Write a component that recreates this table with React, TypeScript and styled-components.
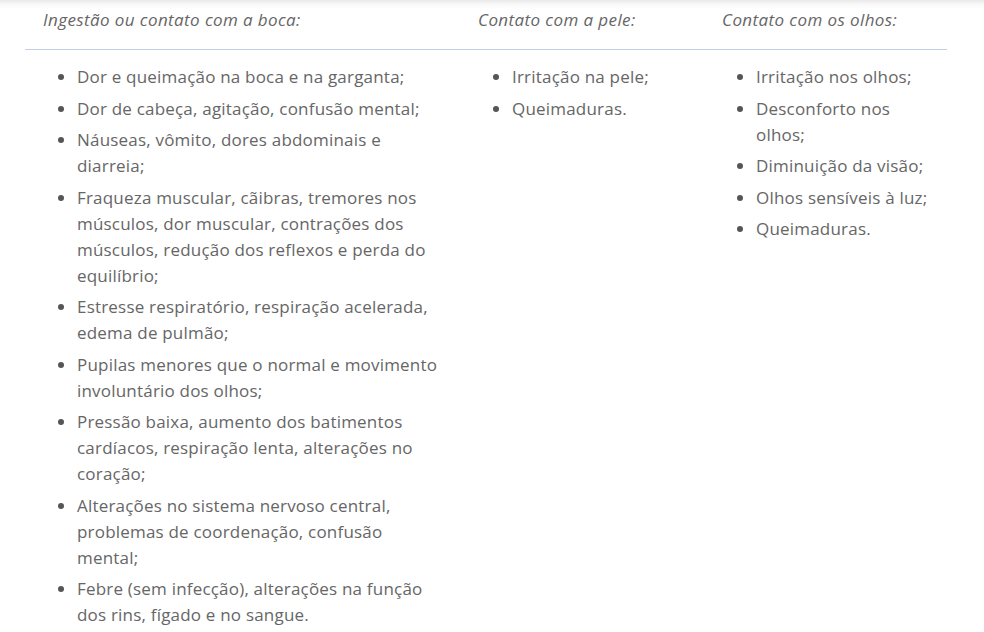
import styled, { createGlobalStyle } from "styled-components";

const GlobalStyle = createGlobalStyle`
  body {
    margin: 0;
    background: #fff;
    font-family: "Open Sans", "Liberation Sans", sans-serif;
  }
`;

const Page = styled.div`
  width: 984px;
  height: 632px;
  overflow: hidden;
  background: linear-gradient(to bottom, #e9e9e9 0px, #f8f8f8 4px, #ffffff 9px);
  padding: 0 0 0 25px;
  box-sizing: border-box;
`;

const Table = styled.div`
  display: grid;
  grid-template-columns: 435px 244px 243px;
  width: 922px;
`;

const HeadCell = styled.div`
  padding: 10px 18px 0;
  height: 50px;
  box-sizing: border-box;
  border-bottom: 1px solid #c4cfe6;
  font-style: italic;
  font-size: 17px;
  letter-spacing: 0.4px;
  line-height: 20px;
  color: #666;
`;

const BodyCell = styled.div`
  padding: 14px 18px 0;
`;

const List = styled.ul`
  margin: 0;
  padding: 0 0 0 34px;
  list-style: disc;
  color: #666;
  font-size: 17px;
  letter-spacing: 0.2px;
  line-height: 26px;
  li {
    margin-bottom: 5.5px;
  }
  li::marker {
    color: #555;
  }
`;

const columns = [
  {
    title: "Ingestão ou contato com a boca:",
    items: [
      "Dor e queimação na boca e na garganta;",
      "Dor de cabeça, agitação, confusão mental;",
      "Náuseas, vômito, dores abdominais e diarreia;",
      "Fraqueza muscular, cãibras, tremores nos músculos, dor muscular, contrações dos músculos, redução dos reflexos e perda do equilíbrio;",
      "Estresse respiratório, respiração acelerada, edema de pulmão;",
      "Pupilas menores que o normal e movimento involuntário dos olhos;",
      "Pressão baixa, aumento dos batimentos cardíacos, respiração lenta, alterações no coração;",
      "Alterações no sistema nervoso central, problemas de coordenação, confusão mental;",
      "Febre (sem infecção), alterações na função dos rins, fígado e no sangue.",
    ],
  },
  {
    title: "Contato com a pele:",
    items: ["Irritação na pele;", "Queimaduras."],
  },
  {
    title: "Contato com os olhos:",
    items: [
      "Irritação nos olhos;",
      "Desconforto nos olhos;",
      "Diminuição da visão;",
      "Olhos sensíveis à luz;",
      "Queimaduras.",
    ],
  },
];

export default function App() {
  return (
    <Page>
      <GlobalStyle />
      <Table>
        {columns.map((c) => (
          <HeadCell key={c.title}>{c.title}</HeadCell>
        ))}
        {columns.map((c) => (
          <BodyCell key={c.title}>
            <List>
              {c.items.map((it) => (
                <li key={it}>{it}</li>
              ))}
            </List>
          </BodyCell>
        ))}
      </Table>
    </Page>
  );
}
